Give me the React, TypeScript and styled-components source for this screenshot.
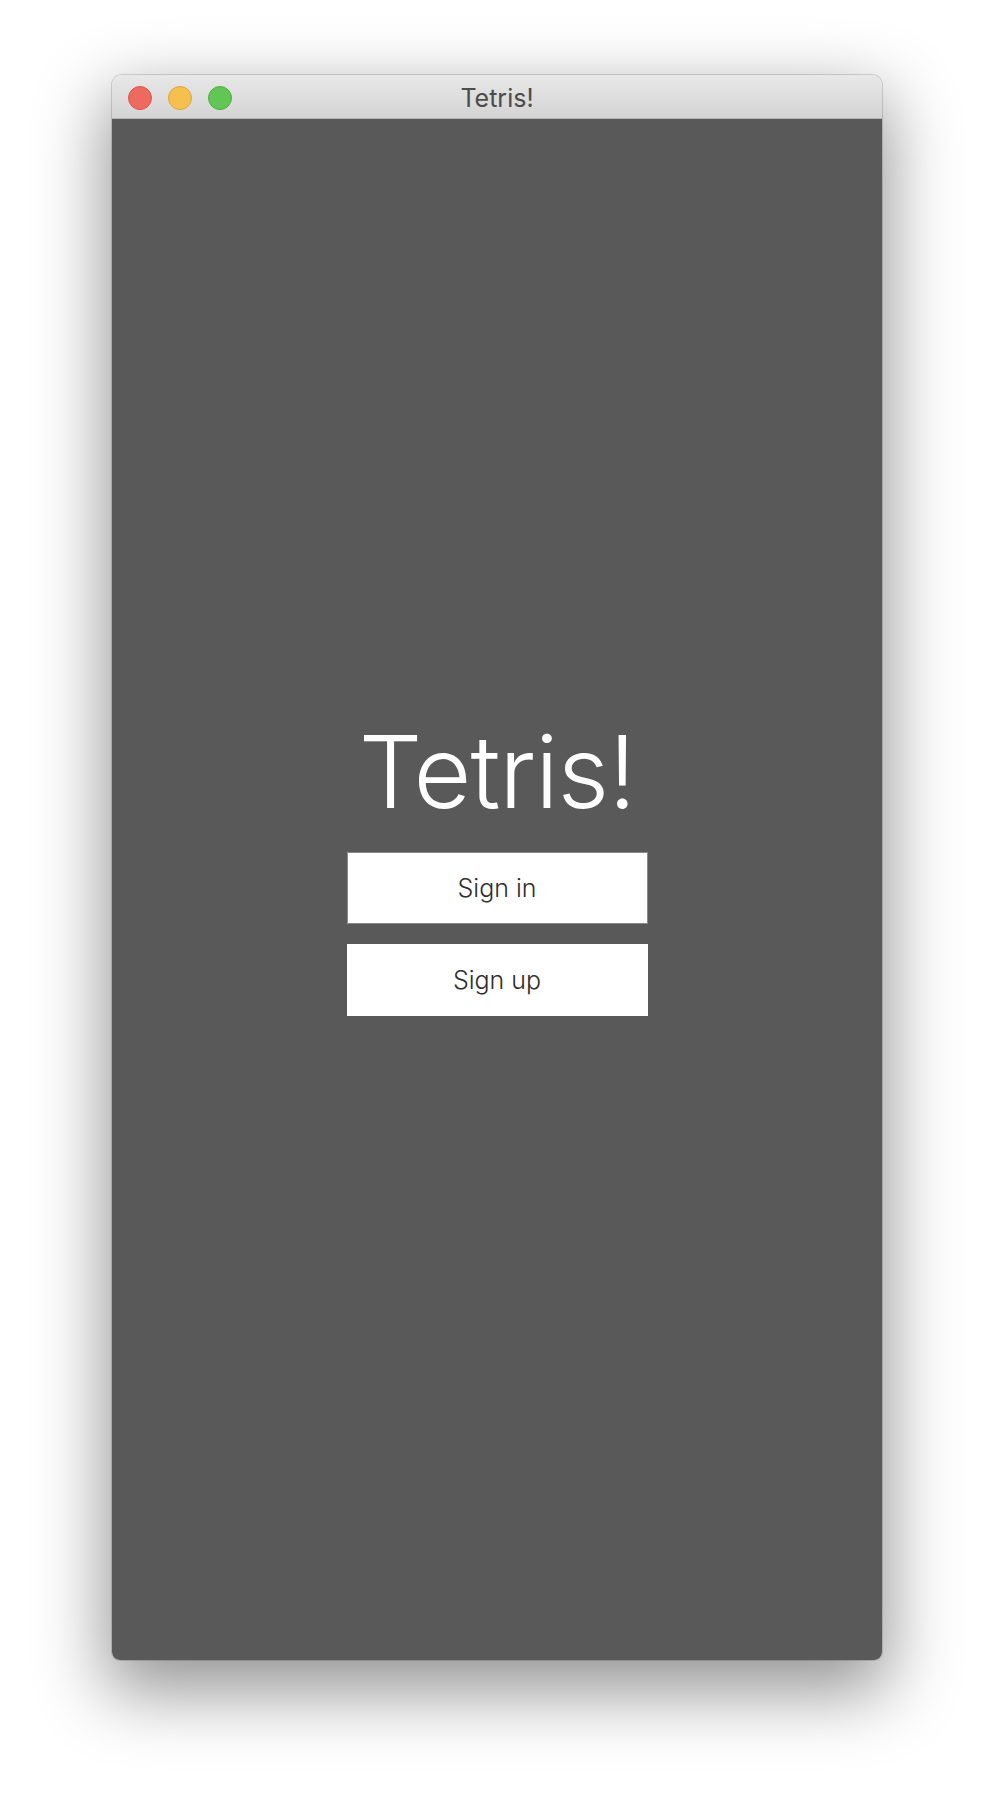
import * as React from 'react';
import styled, { createGlobalStyle } from 'styled-components';

const GlobalStyle = createGlobalStyle`
  html, body {
    margin: 0;
    padding: 0;
    background: #ffffff;
  }
  body {
    font-family: Inter, "Liberation Sans", sans-serif;
  }
`;

const Stage = styled.div`
  width: 994px;
  height: 1808px;
  display: flex;
  justify-content: center;
  padding-top: 75px;
  box-sizing: border-box;
  overflow: hidden;
`;

const Window = styled.div`
  width: 770px;
  height: 1585px;
  display: flex;
  flex-direction: column;
  border-radius: 10px 10px 8px 8px;
  overflow: hidden;
  box-shadow: 0 0 0 1px rgba(0, 0, 0, 0.14), 0 26px 70px 6px rgba(0, 0, 0, 0.42);
`;

const TitleBar = styled.div`
  height: 43px;
  flex: none;
  display: grid;
  grid-template-columns: 1fr auto 1fr;
  align-items: center;
  padding: 0 16px;
  background: linear-gradient(#e8e8e8, #d4d4d4);
  border-bottom: 1px solid #b3b3b3;
`;

const Lights = styled.div`
  display: flex;
  gap: 16px;
  margin-top: 2px;
`;

const Light = styled.span<{ $color: string; $ring: string }>`
  width: 24px;
  height: 24px;
  border-radius: 50%;
  box-sizing: border-box;
  background: ${(p) => p.$color};
  border: 1px solid ${(p) => p.$ring};
`;

const WindowTitle = styled.div`
  font-size: 25px;
  color: #4c4c4c;
  margin-top: 2px;
`;

const Content = styled.main`
  flex: 1;
  background: #595959;
  display: flex;
  flex-direction: column;
  align-items: center;
  padding-top: 603px;
`;

const Heading = styled.h1`
  margin: 0 0 30px;
  font-size: 100px;
  line-height: 1;
  font-weight: 300;
  color: #ffffff;
  letter-spacing: -1px;
`;

const Actions = styled.div`
  display: flex;
  flex-direction: column;
  gap: 20px;
`;

const Button = styled.button<{ $focused?: boolean }>`
  width: 301px;
  height: 72px;
  box-sizing: border-box;
  background: #ffffff;
  border: 1px solid ${(p) => (p.$focused ? '#8a8a8a' : '#ffffff')};
  border-radius: 0;
  font-family: Inter, "Liberation Sans", sans-serif;
  font-size: 25px;
  font-weight: 300;
  color: #2e2e2e;
  cursor: pointer;
`;

export default function App() {
  return (
    <>
      <GlobalStyle />
      <Stage>
        <Window>
          <TitleBar>
            <Lights>
              <Light $color="#ee6a5f" $ring="#d9564b" />
              <Light $color="#f6c04f" $ring="#dea53a" />
              <Light $color="#62c655" $ring="#4ead42" />
            </Lights>
            <WindowTitle>Tetris!</WindowTitle>
            <span />
          </TitleBar>
          <Content>
            <Heading>Tetris!</Heading>
            <Actions>
              <Button $focused>Sign in</Button>
              <Button>Sign up</Button>
            </Actions>
          </Content>
        </Window>
      </Stage>
    </>
  );
}
